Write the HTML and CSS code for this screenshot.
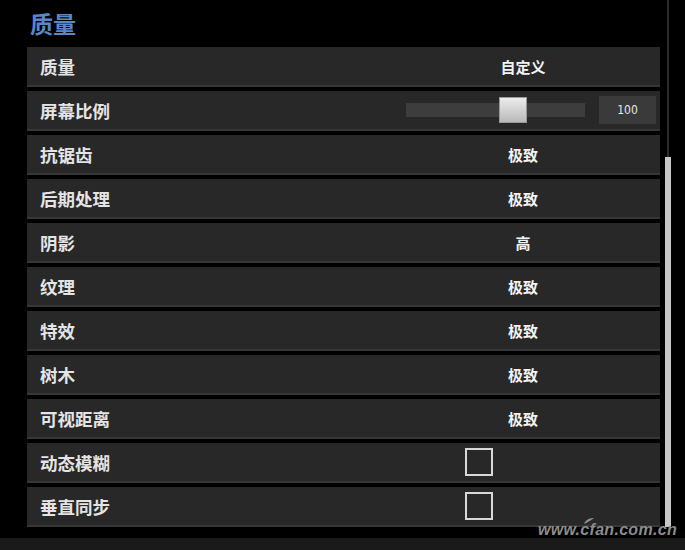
FILE: index.html
```html
<!DOCTYPE html>
<html lang="zh-CN">
<head>
<meta charset="utf-8">
<title>质量</title>
<link rel="stylesheet" href="styles.css">
</head>
<body>
<div class="screen">
  <div class="main">
    <h1 class="title">质量</h1>
    <div class="list">
      <div class="row"><span class="label">质量</span><span class="value">自定义</span></div>
      <div class="row">
        <span class="label">屏幕比例</span>
        <div class="slider-cell">
          <div class="track"><div class="thumb"></div></div>
          <div class="num">100</div>
        </div>
      </div>
      <div class="row"><span class="label">抗锯齿</span><span class="value">极致</span></div>
      <div class="row"><span class="label">后期处理</span><span class="value">极致</span></div>
      <div class="row"><span class="label">阴影</span><span class="value">高</span></div>
      <div class="row"><span class="label">纹理</span><span class="value">极致</span></div>
      <div class="row"><span class="label">特效</span><span class="value">极致</span></div>
      <div class="row"><span class="label">树木</span><span class="value">极致</span></div>
      <div class="row"><span class="label">可视距离</span><span class="value">极致</span></div>
      <div class="row"><span class="label">动态模糊</span><span class="check"></span></div>
      <div class="row"><span class="label">垂直同步</span><span class="check"></span></div>
    </div>
  </div>
  <div class="scroll"><div class="scroll-thumb"></div></div>
</div>
<div class="footer"></div>
<div class="watermark">www.<span class="wm-c">c<svg class="leaf" width="12" height="8" viewBox="0 0 12 8"><path d="M1 7 C3 2 7 1 11 1 C8 3 6 5 1 7 Z" fill="#8c8c8c"/></svg></span>fan.com.cn</div>
</body>
</html>
```
FILE: styles.css
```css
html, body {
  margin: 0;
  padding: 0;
}
body {
  width: 685px;
  height: 550px;
  overflow: hidden;
  background: #000;
  position: relative;
  font-family: "Noto Sans CJK SC", "Noto Sans", sans-serif;
}
.screen {
  display: flex;
  align-items: stretch;
}
.main {
  width: 633px;
  padding-left: 27px;
}
.title {
  margin: 0;
  padding-left: 3px;
  height: 47px;
  line-height: 47px;
  font-size: 23px;
  font-weight: 700;
  color: #5b88c2;
}
.list {
  display: flex;
  flex-direction: column;
  gap: 4px;
}
.row {
  display: grid;
  grid-template-columns: 379px 254px;
  align-items: center;
  height: 38px;
  background: #282828;
  border-bottom: 2px solid #373737;
}
.label {
  padding-left: 13px;
  padding-top: 1px;
  font-size: 17.5px;
  font-weight: 700;
  color: #e4e4e4;
}
.value {
  width: 234px;
  text-align: center;
  font-size: 15px;
  font-weight: 700;
  color: #f2f2f2;
}
.check {
  margin-left: 59px;
  width: 24px;
  height: 24px;
  border: 2px solid #d8d8d8;
}
.slider-cell {
  display: flex;
  align-items: center;
  gap: 14px;
}
.track {
  width: 179px;
  height: 14px;
  background: #3d3d3d;
  display: flex;
  align-items: center;
}
.thumb {
  margin-left: 93px;
  width: 26px;
  height: 24px;
  border: 1px solid #9a9a9a;
  background: linear-gradient(#ececec, #b9b9b9);
  flex-shrink: 0;
}
.num {
  width: 57px;
  height: 28px;
  line-height: 28px;
  background: #3a3a3a;
  color: #e6e6e6;
  text-align: center;
  font-family: "Liberation Sans Narrow", "DejaVu Sans Condensed", sans-serif;
  font-size: 12px;
}
.scroll {
  width: 6px;
  margin-left: 5px;
  background: linear-gradient(to right, transparent 2px, #2a2a2a 2px, #2a2a2a 4px, transparent 4px);
}
.scroll-thumb {
  margin-top: 157px;
  height: 370px;
  background: #c6c6c6;
}
.footer {
  margin-top: 11px;
  height: 12px;
  background: #1a1a1a;
}
.watermark {
  position: absolute;
  right: 8px;
  bottom: 11px;
  font-family: "Liberation Sans", sans-serif;
  font-style: italic;
  font-weight: 700;
  font-size: 16px;
  color: #8c8c8c;
  letter-spacing: 0.3px;
}
.wm-c {
  position: relative;
}
.leaf {
  position: absolute;
  left: 3px;
  top: -4px;
}
```
